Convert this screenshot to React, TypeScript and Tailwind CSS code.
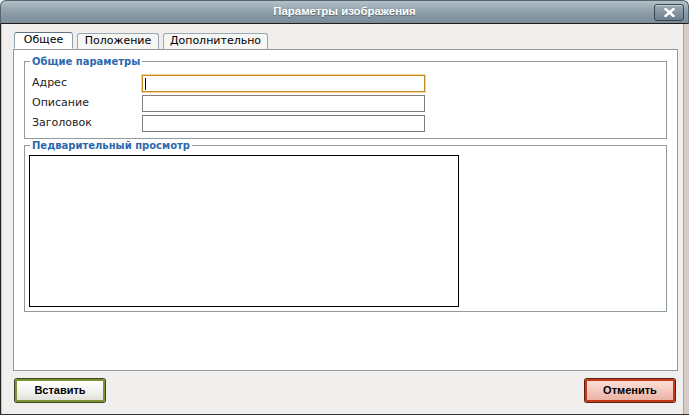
import React from 'react';

const labelFont = { fontFamily: '"DejaVu Sans", Verdana, sans-serif' };

const Field: React.FC<{ label: string; focused?: boolean }> = ({ label, focused }) => (
  <div className="flex items-center h-[17px]">
    <span className="w-[110px] text-[11px] text-[#222]">{label}</span>
    <div
      className={
        focused
          ? 'w-[283px] h-[17px] bg-white border border-[#c58a1e] shadow-[0_0_0_1px_#f2d7a0] flex items-center pl-[2px]'
          : 'w-[283px] h-[17px] bg-white border border-[#7f7f7f]'
      }
    >
      {focused && <div className="w-[1px] h-[12px] bg-black" />}
    </div>
  </div>
);

const Tab: React.FC<{ label: string; active?: boolean; w: string }> = ({ label, active, w }) => (
  <div
    className={
      active
        ? `${w} h-[17px] -mb-px z-10 bg-white border border-[#91a1ab] border-t-[#5b7385] border-b-white rounded-t-[3px] flex items-center justify-center text-[11px] text-black`
        : `${w} h-[16px] mt-[1px] bg-[#f6f6f4] border border-[#9aa8b0] border-b-0 rounded-t-[3px] flex items-center justify-center text-[11px] text-black`
    }
  >
    {label}
  </div>
);

// рамка группы с подписью поверх верхней линии
const Group: React.FC<{ title: string; className: string; children: React.ReactNode }> = ({ title, className, children }) => (
  <div className={`relative border border-[#919b9c] ${className}`}>
    <span className="absolute -top-[7px] left-[5px] bg-white px-[2px] leading-[13px] text-[10px] font-bold text-[#2d68ad] whitespace-nowrap">
      {title}
    </span>
    {children}
  </div>
);

export default function App() {
  return (
    <div
      className="w-[689px] h-[415px] flex flex-col bg-[#f0efed] border-b border-b-[#333] overflow-hidden"
      style={labelFont}
    >
      {/* Заголовок окна */}
      <div className="relative h-[24px] shrink-0 rounded-t-[6px] border border-[#56646d] border-b-[#1e1e1e] bg-gradient-to-b from-[#b3c0c8] via-[#8d9ea9] to-[#7a8c98] flex items-center justify-center">
        <span
          className="text-white text-[11.4px] font-bold [text-shadow:0_1px_1px_rgba(0,0,0,0.35)]"
          style={{ fontFamily: '"Liberation Sans", Arial, sans-serif' }}
        >
          Параметры изображения
        </span>
        <div className="absolute right-[4px] top-[3px] w-[30px] h-[17px] rounded-[3px] border border-[#3a4751] bg-gradient-to-b from-[#9cabb5] to-[#6d7f8b] shadow-[inset_0_1px_0_rgba(255,255,255,0.4)] flex items-center justify-center">
          <svg width="11" height="9" viewBox="0 0 11 9">
            <path d="M1.5 1 L9.5 8 M9.5 1 L1.5 8" stroke="white" strokeWidth="2.4" strokeLinecap="square" />
          </svg>
        </div>
      </div>

      {/* Тело */}
      <div className="flex-1 flex flex-col pl-[12px] pr-[6px] pt-[8px] border-l border-l-[#222] border-r-[5px] border-r-[#d8cbc4] shadow-[inset_1px_0_0_#cbbfb6,inset_-1px_0_0_#a9a5a2]">
        <div className="flex gap-[4px] pl-[1px]">
          <Tab label="Общее" active w="w-[59px]" />
          <Tab label="Положение" w="w-[82px]" />
          <Tab label="Дополнительно" w="w-[105px]" />
        </div>

        <div className="w-[665px] h-[322px] bg-white border border-[#919b9c] px-[10px]">
          <Group title="Общие параметры" className="mt-[11px] pl-[7px] pt-[13px] pb-[6px]">
            <div className="flex flex-col gap-[3px]">
              <Field label="Адрес" focused />
              <Field label="Описание" />
              <Field label="Заголовок" />
            </div>
          </Group>

          <Group title="Педварительный просмотр" className="mt-[6px] pl-[4px] pt-[9px] pb-[4px]">
            <div className="w-[430px] h-[152px] border border-black bg-white" />
          </Group>
        </div>

        <div className="flex justify-between items-center pl-[2px] pr-[3px] pt-[8px]">
          <button
            className="w-[90px] h-[23px] rounded-[2px] border-2 border-[#7b9330] shadow-[0_0_0_1px_#3c4420] bg-gradient-to-b from-white via-[#f4f4f1] to-[#e1e1da] text-[11px] font-bold text-black"
            style={{ fontFamily: '"Liberation Sans", Arial, sans-serif' }}
          >
            Вставить
          </button>
          <button
            className="w-[90px] h-[23px] rounded-[2px] border-2 border-[#c23a18] shadow-[0_0_0_1px_#5a2010] bg-gradient-to-b from-[#fbe0d9] via-[#f4c8bd] to-[#ebb3a5] text-[11px] font-bold text-black"
            style={{ fontFamily: '"Liberation Sans", Arial, sans-serif' }}
          >
            Отменить
          </button>
        </div>
      </div>
    </div>
  );
}
